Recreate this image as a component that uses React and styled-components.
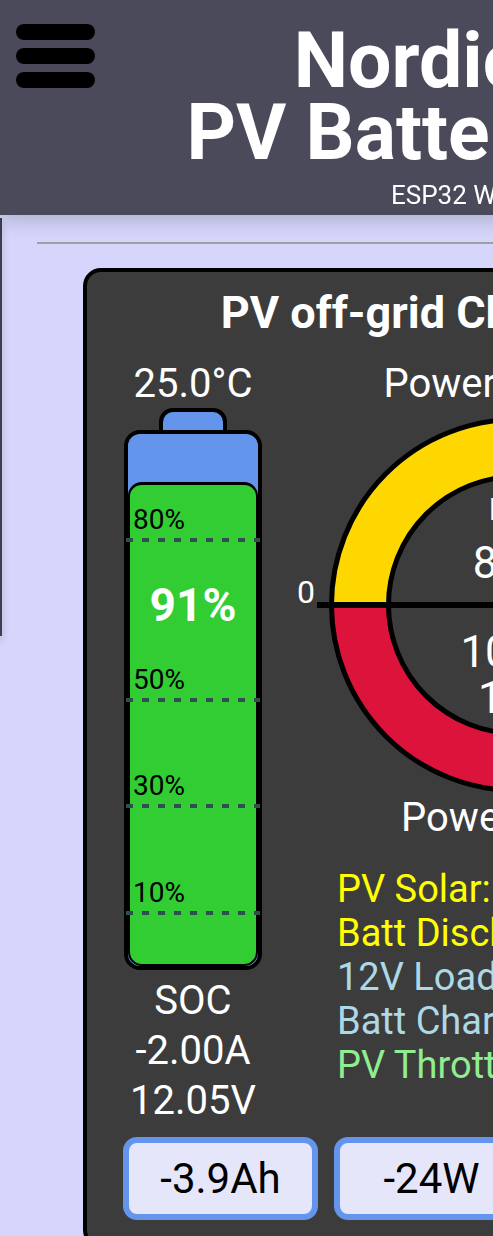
import React from "react";
import styled, { createGlobalStyle } from "styled-components";

const GlobalStyle = createGlobalStyle`
  html, body {
    margin: 0;
    padding: 0;
    background: #d6d6fc;
    overflow-x: hidden;
    scrollbar-width: none;
  }
  html::-webkit-scrollbar, body::-webkit-scrollbar {
    display: none;
  }
  body {
    font-family: Roboto, "Liberation Sans", sans-serif;
  }
`;

const Page = styled.div`
  width: 1034px;
`;

const Header = styled.header`
  position: relative;
  z-index: 2;
  display: grid;
  grid-template-columns: 1fr auto 1fr;
  align-items: start;
  height: 215px;
  box-sizing: border-box;
  padding: 24px 16px 0;
  background: #4a4a5a;
  color: #fff;
  box-shadow: 0 6px 18px rgba(0, 0, 0, 0.18);
`;

const MenuButton = styled.button`
  justify-self: start;
  display: flex;
  flex-direction: column;
  gap: 8px;
  width: 79px;
  padding: 0;
  border: 0;
  background: none;
  cursor: pointer;
`;

const Bar = styled.span`
  display: block;
  height: 16px;
  border-radius: 8px;
  background: #000;
`;

const TitleBlock = styled.div`
  margin-top: 1px;
  text-align: center;
  white-space: nowrap;
`;

const Title = styled.h1`
  margin: 0;
  font-size: 77px;
  line-height: 72px;
  font-weight: 700;
`;

const Subtitle = styled.div`
  margin-top: 11px;
  font-size: 26px;
  line-height: 30px;
`;

const Drawer = styled.nav`
  position: fixed;
  top: 218px;
  left: -238px;
  width: 240px;
  height: 418px;
  background: #3e3e4c;
  box-shadow: 0 4px 8px rgba(0, 0, 0, 0.15);
`;

const Main = styled.main`
  padding: 27px 0 40px;
`;

const Rule = styled.hr`
  margin: 0 37px;
  height: 0;
  border: 0;
  border-top: 2px solid #a0a0a0;
`;

const Card = styled.section`
  margin: 24px 83px 0;
  padding: 14px 0 24px;
  border: 4px solid #000;
  border-radius: 18px;
  background: #3c3c3c;
  color: #fff;
`;

const CardTitle = styled.h2`
  margin: 0;
  text-align: center;
  font-size: 45px;
  line-height: 54px;
  font-weight: 700;
  white-space: nowrap;
`;

const Columns = styled.div`
  display: grid;
  grid-template-columns: 212px 436px 212px;
  margin-top: 20px;
`;

const Column = styled.div`
  display: flex;
  flex-direction: column;
  align-items: center;
`;

const Caption = styled.div`
  font-size: 40px;
  line-height: 48px;
  white-space: nowrap;
`;

const Terminal = styled.div`
  width: 68px;
  height: 22px;
  box-sizing: border-box;
  border: 4px solid #000;
  border-bottom: 0;
  border-radius: 14px 14px 0 0;
  background: #6495ed;
`;

const BatteryBody = styled.div`
  position: relative;
  width: 138px;
  height: 540px;
  box-sizing: border-box;
  border: 4px solid #000;
  border-radius: 16px;
  background: #6495ed;
`;

const Fill = styled.div`
  position: absolute;
  left: 0;
  right: 0;
  bottom: 0;
  box-sizing: border-box;
  border: 2px solid #000;
  border-top-width: 3px;
  border-radius: 14px;
  background: #32cd32;
`;

const Marker = styled.div`
  position: absolute;
  left: -2px;
  right: -2px;
  height: 4px;
  background: repeating-linear-gradient(
    90deg,
    #2f4f4f 0 7px,
    transparent 7px 16px
  );
`;

const MarkerLabel = styled.span`
  position: absolute;
  left: 7px;
  bottom: 8px;
  font-size: 28px;
  line-height: 28px;
  color: #000;
`;

const Percent = styled.div`
  position: absolute;
  top: 148px;
  left: 0;
  right: 0;
  text-align: center;
  font-size: 46px;
  line-height: 46px;
  font-weight: 700;
  color: #fff;
`;

const Readings = styled.div`
  margin-top: 6px;
  text-align: center;
  font-size: 40px;
  line-height: 50px;
`;

const Gauge = styled.svg`
  display: block;
  overflow: visible;
`;

const Legend = styled.div`
  align-self: stretch;
  margin-top: 25px;
  padding-left: 38px;
  font-size: 38px;
  line-height: 44px;
  white-space: nowrap;
`;

const LegendItem = styled.div`
  color: ${({ $color }) => $color};
`;

const ButtonRow = styled.div`
  display: flex;
  gap: 16px;
  margin-top: 11px;
  padding: 0 36px;
`;

const ValueBox = styled.button`
  flex: 0 0 195px;
  display: flex;
  align-items: center;
  justify-content: center;
  height: 83px;
  box-sizing: border-box;
  border: 6px solid #6495ed;
  border-radius: 14px;
  background: #e6e6fa;
  font-family: Roboto, "Liberation Sans", sans-serif;
  font-size: 42px;
  color: #000;
`;

const soc = 91;
const marks = [80, 50, 30, 10];

const legend = [
  { text: "PV Solar: 86W", color: "#ffff00" },
  { text: "Batt Discharge: 24W", color: "#ffff00" },
  { text: "12V Load: 106W", color: "#add8e6" },
  { text: "Batt Charge: 0W", color: "#add8e6" },
  { text: "PV Throttled: 0W", color: "#90ee90" },
];

const values = ["-3.9Ah", "-24W", "86W", "106W"];

function PowerGauge() {
  const cx = 218;
  const cy = 197;
  const ro = 185.5;
  const ri = 128.5;
  const txt = { fill: "#fff", fontFamily: "Roboto, sans-serif" };
  return (
    <Gauge width="436" height="386" viewBox="0 0 436 386">
      <circle cx={cx} cy={cy} r={ro} fill="#dc143c" />
      <path
        d={`M ${cx - ro} ${cy} A ${ro} ${ro} 0 0 1 ${cx + ro} ${cy} Z`}
        fill="#ffd700"
      />
      <circle cx={cx} cy={cy} r={ro} fill="none" stroke="#000" strokeWidth="5" />
      <circle cx={cx} cy={cy} r={ri} fill="#3c3c3c" stroke="#000" strokeWidth="5" />
      <line x1="18" y1={cy} x2="418" y2={cy} stroke="#000" strokeWidth="6" />
      <text x="16" y="195" textAnchor="end" fontSize="32" {...txt}>0</text>
      <text x="420" y="195" textAnchor="start" fontSize="32" {...txt}>0</text>
      <text x={cx} y="112" textAnchor="middle" fontSize="31" {...txt}>Batt</text>
      <text x={cx} y="170" textAnchor="middle" fontSize="44" {...txt}>86W</text>
      <text x={cx} y="259" textAnchor="middle" fontSize="44" {...txt}>106W</text>
      <text x={cx} y="305" textAnchor="middle" fontSize="44" {...txt}>12A</text>
    </Gauge>
  );
}

export default function App() {
  return (
    <Page>
      <GlobalStyle />
      <Header>
        <MenuButton aria-label="Menu">
          <Bar />
          <Bar />
          <Bar />
        </MenuButton>
        <TitleBlock>
          <Title>
            Nordic Cabin
            <br />
            PV Battery Monitor
          </Title>
          <Subtitle>ESP32 WiFi Controller</Subtitle>
        </TitleBlock>
        <div />
      </Header>
      <Drawer />
      <Main>
        <Rule />
        <Card>
          <CardTitle>PV off-grid Charge Controller</CardTitle>
          <Columns>
            <Column>
              <Caption>25.0°C</Caption>
              <Terminal />
              <BatteryBody>
                <Fill style={{ height: `${soc}%` }} />
                {marks.map((m) => (
                  <Marker key={m} style={{ bottom: `calc(${m}% - 2px)` }}>
                    <MarkerLabel>{m}%</MarkerLabel>
                  </Marker>
                ))}
                <Percent>{soc}%</Percent>
              </BatteryBody>
              <Readings>
                SOC
                <br />
                -2.00A
                <br />
                12.05V
              </Readings>
            </Column>
            <Column>
              <Caption>Power Sources</Caption>
              <PowerGauge />
              <Caption>Power Loads</Caption>
              <Legend>
                {legend.map((l) => (
                  <LegendItem key={l.text} $color={l.color}>
                    {l.text}
                  </LegendItem>
                ))}
              </Legend>
            </Column>
            <Column />
          </Columns>
          <ButtonRow>
            {values.map((v) => (
              <ValueBox key={v}>{v}</ValueBox>
            ))}
          </ButtonRow>
        </Card>
      </Main>
    </Page>
  );
}
